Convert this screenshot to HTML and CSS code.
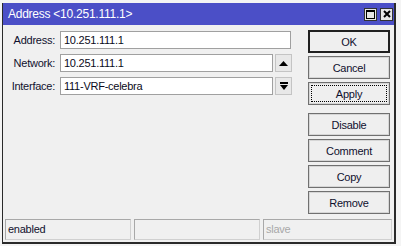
FILE: index.html
```html
<!doctype html>
<html>
<head>
<meta charset="utf-8">
<title>Address</title>
<link rel="stylesheet" href="styles.css">
</head>
<body>

<div class="window">
    <div class="titlebar">
        <span class="title">Address &lt;10.251.111.1&gt;</span>
        <div class="winbtns">
            <span class="winbtn"><svg width="9" height="9" viewBox="0 0 9 9"><rect x="0.5" y="0.5" width="8" height="8" fill="none" stroke="#000"/><rect x="0" y="0" width="9" height="2" fill="#000"/></svg></span>
            <span class="winbtn"><svg width="8" height="8" viewBox="0 0 8 8"><path d="M1 1 L7 7 M7 1 L1 7" stroke="#000" stroke-width="2"/></svg></span>
        </div>
    </div>

    <div class="main">
        <div class="form">
            <div class="row">
                <label>Address:</label>
                <div class="field wide">10.251.111.1</div>
            </div>
            <div class="row">
                <label>Network:</label>
                <div class="field">10.251.111.1</div>
                <span class="arrow"><svg width="9" height="5" viewBox="0 0 9 5"><path d="M0 5 L4.5 0 L9 5Z" fill="#000"/></svg></span>
            </div>
            <div class="row">
                <label>Interface:</label>
                <div class="field">111-VRF-celebra</div>
                <span class="arrow"><svg width="8" height="8" viewBox="0 0 8 8"><rect x="0" y="0" width="8" height="2" fill="#000"/><path d="M0 3 H8 L4 8Z" fill="#000"/></svg></span>
            </div>
        </div>

        <div class="buttons">
            <div class="btn default">OK</div>
            <div class="btn">Cancel</div>
            <div class="btn focus"><span>Apply</span></div>
            <div class="spacer"></div>
            <div class="btn">Disable</div>
            <div class="btn">Comment</div>
            <div class="btn">Copy</div>
            <div class="btn">Remove</div>
        </div>
    </div>

    <div class="statusbar">
        <div class="status">enabled</div>
        <div class="status"></div>
        <div class="status last dim">slave</div>
    </div>
</div>

</body>
</html>
```

FILE: styles.css
```css
body{
    margin: 0;
    background-color: #f4f4f4;
    font-family: "Liberation Sans", Arial, sans-serif;
    font-size: 11px;
    letter-spacing: -0.25px;
    color: #10102e;
}
.window{
    margin: 3px 0 0 2px;
    width: 391px;
    height: 239px;
    background-color: #f0f0f0;
    border-left: 1px solid #2a2a2a;
    border-right: 2px solid #2a2a2a;
    border-bottom: 2px solid #2a2a2a;
    display: flex;
    flex-direction: column;
}
.titlebar{
    height: 22px;
    background-color: #4b4fc7;
    display: flex;
    align-items: center;
    justify-content: space-between;
    padding: 0 1px 0 5px;
}
.title{
    color: #ffffff;
    font-size: 12px;
}
.winbtns{
    display: flex;
    gap: 3px;
}
.winbtn{
    width: 13px;
    height: 13px;
    box-sizing: border-box;
    border: 1px solid #333;
    background-color: #e6e6e6;
    display: flex;
    align-items: center;
    justify-content: center;
}
.main{
    flex: 1;
    display: flex;
    justify-content: space-between;
    padding: 5px 4px 0 0;
}
.form{
    margin-top: 1px;
    display: flex;
    flex-direction: column;
    gap: 5px;
}
.row{
    display: flex;
    align-items: center;
    height: 18px;
}
.row label{
    width: 52px;
    text-align: right;
    margin-right: 5px;
}
.field{
    width: 213px;
    height: 18px;
    box-sizing: border-box;
    background-color: #ffffff;
    border: 1px solid #a0a0a0;
    padding: 0 3px;
    line-height: 16px;
    color: #0a0a20;
}
.field.wide{
    width: 231px;
}
.arrow{
    width: 17px;
    height: 18px;
    box-sizing: border-box;
    margin-left: 2px;
    border: 1px solid #c4c4c4;
    background-color: #e8e8e8;
    display: flex;
    align-items: center;
    justify-content: center;
}
.buttons{
    width: 82px;
    display: flex;
    flex-direction: column;
    gap: 3px;
}
.spacer{
    height: 2px;
}
.btn{
    height: 23px;
    box-sizing: border-box;
    border: 1px solid #707070;
    box-shadow: inset 0 0 0 1px #d6d6d6;
    background-color: #efefef;
    display: flex;
    align-items: center;
    justify-content: center;
}
.btn.default{
    border: 2px solid #202020;
    box-shadow: none;
}
.btn.focus span{
    width: 76px;
    height: 17px;
    box-sizing: border-box;
    border: 1px dotted #000;
    display: flex;
    align-items: center;
    justify-content: center;
}
.statusbar{
    display: flex;
    gap: 3px;
    padding: 0 1px 2px 2px;
    height: 21px;
}
.status{
    width: 126px;
    box-sizing: border-box;
    border: 1px solid #a8a8a8;
    border-right-color: #d0d0d0;
    border-bottom-color: #d0d0d0;
    padding: 0 2px;
    line-height: 18px;
}
.status.last{
    width: 129px;
}
.dim{
    color: #a8a8a8;
}
```
